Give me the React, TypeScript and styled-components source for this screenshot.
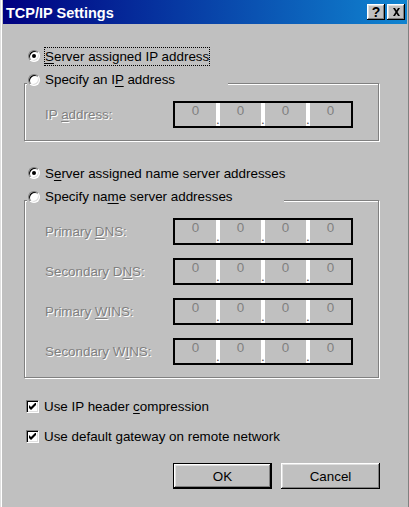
import React from 'react'
import styled, { createGlobalStyle } from 'styled-components'

const GlobalStyle = createGlobalStyle`
  html, body {
    margin: 0;
    padding: 0;
    background: #c0c0c0;
  }
  body {
    font-family: 'Liberation Sans', Arial, sans-serif;
  }
`

// ------------- window frame -------------
const Window = styled.div`
  width: 409px;
  height: 507px;
  box-sizing: border-box;
  padding: 0 2px 0 3px;
  background: #c0c0c0;
  box-shadow: inset 1px 0 #dfdfdf, inset 2px 0 #fff, inset -1px 0 #808080;
  overflow: hidden;
  font-size: 13.4px;
  color: #000;
`

const TitleBar = styled.div`
  height: 24px;
  box-sizing: border-box;
  display: flex;
  align-items: center;
  padding: 0 2px 0 3px;
  background: linear-gradient(90deg, #000080, #1084d0);
`

const Title = styled.div`
  flex: 1;
  padding-top: 2px;
  color: #fff;
  font-weight: bold;
  font-size: 14.5px;
`

const CaptionButtons = styled.div`
  display: flex;
  gap: 2px;
`

const CaptionButton = styled.div`
  width: 18px;
  height: 16px;
  box-sizing: border-box;
  display: flex;
  align-items: center;
  justify-content: center;
  background: #c0c0c0;
  box-shadow: inset -1px -1px #000, inset 1px 1px #fff, inset -2px -2px #808080, inset 2px 2px #dfdfdf;
  font-weight: bold;
  font-size: 14px;
  line-height: 14px;
  color: #000;
`

const Body = styled.div`
  padding: 20px 0 0 21px;
`

// ------------- radio / checkbox -------------
const OptionRow = styled.div<{ $h?: number }>`
  height: ${p => p.$h ?? 24}px;
  display: flex;
  align-items: center;
  gap: 5px;
  padding-left: 4px;
  white-space: nowrap;
`

const RadioCircle = styled.span<{ $checked?: boolean }>`
  width: 12px;
  height: 12px;
  box-sizing: border-box;
  flex: none;
  border-radius: 50%;
  border: 1px solid;
  border-color: #808080 #fff #fff #808080;
  background: #fff;
  box-shadow: inset 1px 1px 0 #000, inset -1px -1px 0 #dfdfdf;
  display: flex;
  align-items: center;
  justify-content: center;
  &::after {
    content: '';
    width: 4px;
    height: 4px;
    border-radius: 50%;
    background: ${p => (p.$checked ? '#000' : 'transparent')};
  }
`

const CheckBox = styled.span`
  width: 13px;
  height: 13px;
  box-sizing: border-box;
  flex: none;
  margin-left: -1px;
  border: 1px solid;
  border-color: #808080 #fff #fff #808080;
  background: #fff;
  box-shadow: inset 1px 1px 0 #000, inset -1px -1px 0 #dfdfdf;
  display: flex;
  align-items: center;
  justify-content: center;
`

const Focus = styled.span`
  margin-left: -1px;
  padding: 1px 0;
  line-height: 15px;
  border: 1px dotted #000;
`

const Key = styled.span`
  text-decoration: underline;
  text-underline-offset: 2px;
`

// ------------- group box -------------
const GroupBox = styled.fieldset<{ $mb: number }>`
  width: 355px;
  box-sizing: border-box;
  margin: 0 0 ${p => p.$mb}px 0;
  padding: 0;
  border: 1px solid #808080;
  box-shadow: 1px 1px 0 #fff, inset 1px 1px 0 #fff;
`

const Caption = styled.legend<{ $width: number }>`
  width: ${p => p.$width}px;
  box-sizing: border-box;
  margin-left: 2px;
  padding: 0 0 7px 0;
  background: #c0c0c0;
  & > div {
    padding-left: 1px;
    height: 23px;
  }
`

const Fields = styled.div`
  display: flex;
  flex-direction: column;
  gap: 13px;
  padding: 3px 0 12px 20px;
`

const FieldRow = styled.div`
  display: flex;
  align-items: center;
`

const FieldLabel = styled.div`
  width: 128px;
  color: #808080;
  text-shadow: 1px 1px 0 #fff;
  white-space: nowrap;
`

const IpBox = styled.div`
  width: 180px;
  height: 27px;
  box-sizing: border-box;
  border: 2px solid #000;
  display: grid;
  grid-template-columns: 1fr 4px 1fr 4px 1fr 4px 1fr;
`

const Octet = styled.div`
  text-align: center;
  line-height: 15px;
  color: #808080;
`

const Dot = styled.div`
  background: #fff;
  display: flex;
  align-items: flex-end;
  line-height: 13px;
  color: #505050;
`

// ------------- bottom -------------
const Checks = styled.div`
  display: flex;
  flex-direction: column;
  gap: 10px;
  & > div {
    padding-left: 3px;
  }
`

const ButtonRow = styled.div`
  width: 356px;
  display: flex;
  justify-content: flex-end;
  gap: 9px;
  margin-top: 17px;
`

const PushButton = styled.div<{ $default?: boolean }>`
  width: 99px;
  height: 26px;
  display: flex;
  align-items: center;
  justify-content: center;
  background: #c0c0c0;
  box-shadow: ${p =>
    p.$default
      ? 'inset 0 0 0 1px #000, inset -2px -2px #000, inset 2px 2px #fff, inset -3px -3px #808080, inset 3px 3px #dfdfdf'
      : 'inset -1px -1px #000, inset 1px 1px #fff, inset -2px -2px #808080, inset 2px 2px #dfdfdf'};
`

const CloseGlyph = () => (
  <svg width="9" height="8" viewBox="0 0 9 8">
    <path d="M1 0h2l1.5 2.5L6 0h2L5.5 4 8 8H6L4.5 5.5 3 8H1l2.5-4z" fill="#000" />
  </svg>
)

const CheckGlyph = () => (
  <svg width="7" height="7" viewBox="0 0 7 7">
    <polygon points="0,2 2,4 7,-1 7,2 2,7 0,5" fill="#000" />
  </svg>
)

const IpAddress = () => (
  <IpBox>
    <Octet>0</Octet>
    <Dot>.</Dot>
    <Octet>0</Octet>
    <Dot>.</Dot>
    <Octet>0</Octet>
    <Dot>.</Dot>
    <Octet>0</Octet>
  </IpBox>
)

const ipRows = [
  { before: 'Primary ', key: 'D', after: 'NS:' },
  { before: 'Secondary D', key: 'N', after: 'S:' },
  { before: 'Primary ', key: 'W', after: 'INS:' },
  { before: 'Secondary W', key: 'I', after: 'NS:' }
]

const App = () => {
  return (
    <Window>
      <GlobalStyle />
      <TitleBar>
        <Title>TCP/IP Settings</Title>
        <CaptionButtons>
          <CaptionButton>?</CaptionButton>
          <CaptionButton>
            <CloseGlyph />
          </CaptionButton>
        </CaptionButtons>
      </TitleBar>

      <Body>
        <OptionRow>
          <RadioCircle $checked />
          <Focus>
            <Key>S</Key>erver assigned IP address
          </Focus>
        </OptionRow>

        <GroupBox $mb={20}>
          <Caption $width={201}>
            <OptionRow>
              <RadioCircle />
              <span>
                Specify an I<Key>P</Key> address
              </span>
            </OptionRow>
          </Caption>
          <Fields>
            <FieldRow>
              <FieldLabel>
                IP <Key>a</Key>ddress:
              </FieldLabel>
              <IpAddress />
            </FieldRow>
          </Fields>
        </GroupBox>

        <OptionRow>
          <RadioCircle $checked />
          <span>
            S<Key>e</Key>rver assigned name server addresses
          </span>
        </OptionRow>

        <GroupBox $mb={18}>
          <Caption $width={257}>
            <OptionRow>
              <RadioCircle />
              <span>
                Specify na<Key>m</Key>e server addresses
              </span>
            </OptionRow>
          </Caption>
          <Fields>
            {ipRows.map(r => (
              <FieldRow key={r.before + r.key}>
                <FieldLabel>
                  {r.before}
                  <Key>{r.key}</Key>
                  {r.after}
                </FieldLabel>
                <IpAddress />
              </FieldRow>
            ))}
          </Fields>
        </GroupBox>

        <Checks>
          <OptionRow $h={20}>
            <CheckBox>
              <CheckGlyph />
            </CheckBox>
            <span>
              Use IP header <Key>c</Key>ompression
            </span>
          </OptionRow>
          <OptionRow $h={20}>
            <CheckBox>
              <CheckGlyph />
            </CheckBox>
            <span>
              Use default <Key>g</Key>ateway on remote network
            </span>
          </OptionRow>
        </Checks>

        <ButtonRow>
          <PushButton $default>OK</PushButton>
          <PushButton>Cancel</PushButton>
        </ButtonRow>
      </Body>
    </Window>
  )
}

export default App
